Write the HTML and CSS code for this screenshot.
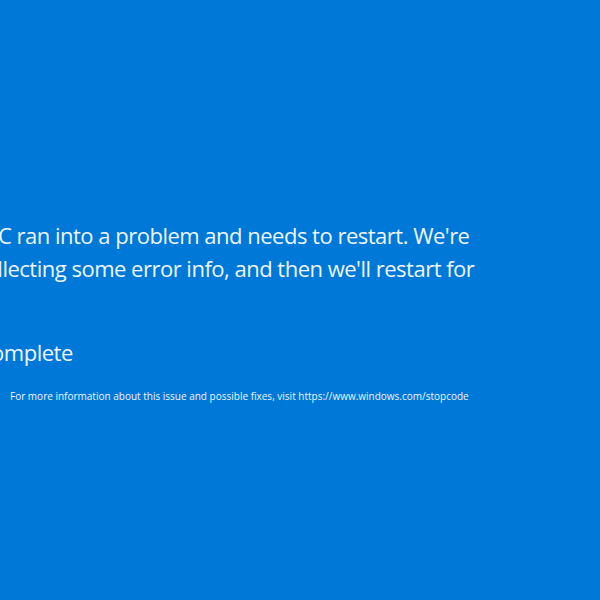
FILE: index.html
```html
<!DOCTYPE html>
<html lang="en">
<head>
<meta charset="utf-8">
<title>Stop</title>
<link rel="stylesheet" href="styles.css">
</head>
<body>
<main class="screen">
  <div class="face">:(</div>
  <p class="msg">Your PC ran into a problem and needs to restart. We're<br>just collecting some error info, and then we'll restart for<br>you.</p>
  <p class="progress">20% complete</p>
  <div class="info">
    <div class="qr"></div>
    <p class="more">For more information about this issue and possible fixes, visit https://www.windows.com/stopcode</p>
  </div>
</main>
</body>
</html>
```
FILE: styles.css
```css
html, body {
  margin: 0;
  padding: 0;
  width: 600px;
  height: 600px;
  overflow: hidden;
  background: #0078d7;
}
.screen {
  font-family: "Open Sans", "Noto Sans", sans-serif;
  color: #eef5fc;
  margin-left: -66px;
  padding-top: 100px;
  width: 666px;
}
.face {
  font-size: 90px;
  line-height: 100px;
  height: 100px;
  font-weight: 300;
}
.msg {
  margin: 19px 0 0 0;
  font-size: 22px;
  line-height: 33px;
  letter-spacing: -0.5px;
  font-weight: 400;
}
.progress {
  margin: 18px 0 0 0;
  font-size: 22px;
  line-height: 33px;
  letter-spacing: -0.5px;
}
.info {
  display: flex;
  gap: 10px;
  margin-top: 20px;
}
.qr {
  width: 66px;
  height: 66px;
  flex: none;
}
.more {
  margin: 0;
  font-size: 10px;
  line-height: 14px;
}
```
